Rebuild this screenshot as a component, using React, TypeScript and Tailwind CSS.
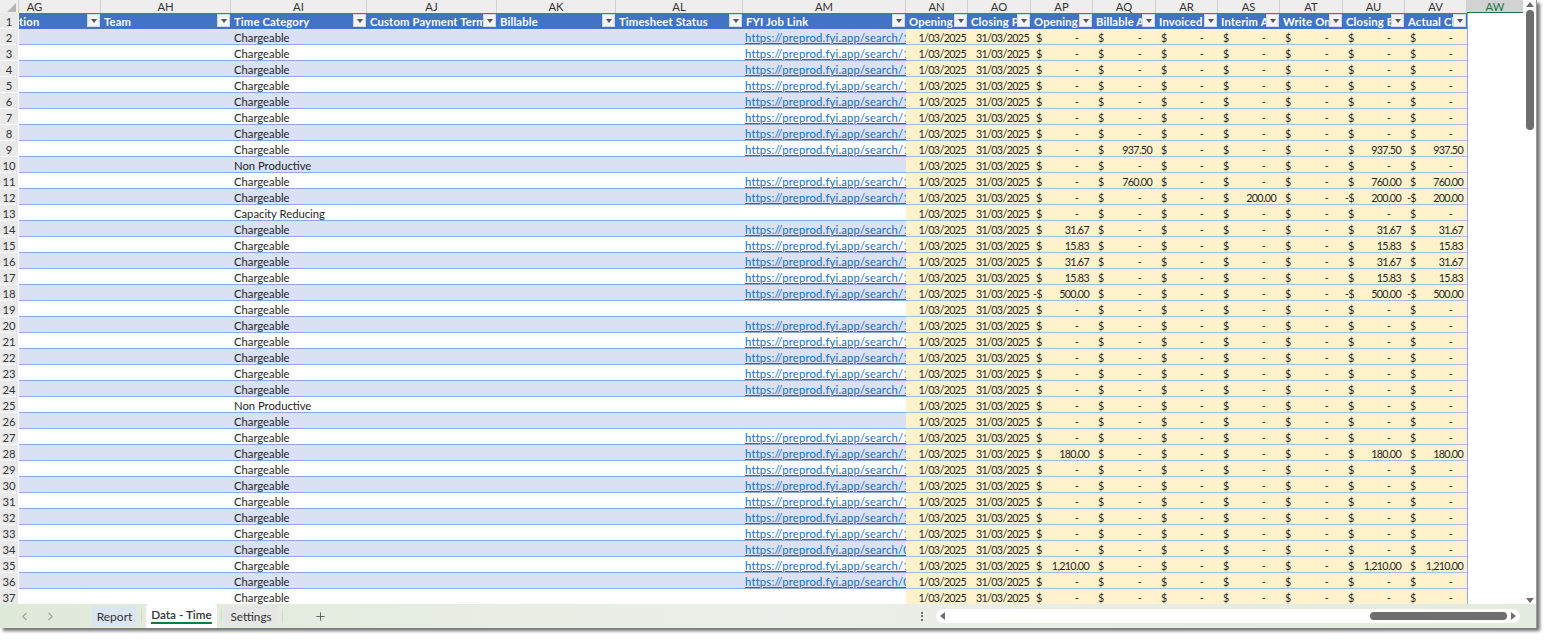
import React from 'react';
import { ChevronLeft, ChevronRight, Plus } from 'lucide-react';

const GRID = 'grid grid-cols-[19px_82px_130px_136px_130px_119px_127px_163px_62px_63px_62px_63px_62px_62px_63px_62px_62px_56px] grid-rows-[16px]';
const HEAD_GRID = 'grid grid-cols-[19px_82px_130px_136px_130px_119px_127px_163px_62px_63px_62px_63px_62px_62px_63px_62px_62px_56px] grid-rows-[13px]';
const NUM = 'text-[10.75px] tracking-[-0.65px]';

const COLUMNS = ['AH', 'AI', 'AJ', 'AK', 'AL', 'AM', 'AN', 'AO', 'AP', 'AQ', 'AR', 'AS', 'AT', 'AU', 'AV'];

const HEADERS = [
  'Team', 'Time Category', 'Custom Payment Terms', 'Billable', 'Timesheet Status', 'FYI Job Link',
  'Opening Date', 'Closing Period', 'Opening Balance', 'Billable Amount', 'Invoiced Amount', 'Interim Amount',
  'Write On/Off', 'Closing Balance', 'Actual Closing',
];

type Row = { n: number; cat: string; link?: string; vals?: Record<string, string> };

function buildRows(): Row[] {
  const noLink = [10, 13, 19, 25, 26, 37];
  const cats: Record<number, string> = { 10: 'Non Productive', 13: 'Capacity Reducing', 25: 'Non Productive' };
  const vals: Record<number, Record<string, string>> = {
    9: { AQ: '937.50', AU: '937.50', AV: '937.50' },
    11: { AQ: '760.00', AU: '760.00', AV: '760.00' },
    12: { AS: '200.00', AU: '-200.00', AV: '-200.00' },
    14: { AP: '31.67', AU: '31.67', AV: '31.67' },
    15: { AP: '15.83', AU: '15.83', AV: '15.83' },
    16: { AP: '31.67', AU: '31.67', AV: '31.67' },
    17: { AP: '15.83', AU: '15.83', AV: '15.83' },
    18: { AP: '-500.00', AU: '-500.00', AV: '-500.00' },
    28: { AP: '180.00', AU: '180.00', AV: '180.00' },
    35: { AP: '1,210.00', AU: '1,210.00', AV: '1,210.00' },
  };
  const rows: Row[] = [];
  for (let n = 2; n <= 37; n++) {
    rows.push({
      n,
      cat: cats[n] ?? 'Chargeable',
      link: noLink.includes(n) ? undefined : n === 34 || n === 36 ? 'https://preprod.fyi.app/search/0' : 'https://preprod.fyi.app/search/1',
      vals: vals[n],
    });
  }
  return rows;
}

function FilterButton() {
  return (
    <span className="mr-[1px] mt-[1px] flex h-[13px] w-[13px] shrink-0 items-center justify-center border border-[#d0d7e5] bg-[#f4f4f4]">
      <span className="h-0 w-0 border-x-[3.5px] border-t-[4px] border-x-transparent border-t-[#555]" />
    </span>
  );
}

function Money({ value }: { value?: string }) {
  const negative = value?.startsWith('-');
  const amount = negative ? value!.slice(1) : value;
  return (
    <div className={`flex justify-between overflow-hidden border-b border-[#a9bde3] bg-[#fff2cc] ${NUM}`}>
      <span className={negative ? 'pl-[2px]' : 'pl-[5px]'}>{negative ? '-$' : '$'}</span>
      {amount ? <span className="pr-[4px]">{amount}</span> : <span className="pr-[15px]">-</span>}
    </div>
  );
}

function DataRow({ row }: { row: Row }) {
  const bg = row.n % 2 === 0 ? 'bg-[#d9e1f2]' : 'bg-white';
  const plain = `${bg} overflow-hidden whitespace-nowrap border-b border-[#8ea9db]`;
  return (
    <div className={`${GRID} leading-[17px]`}>
      <div className="border-b border-r border-white bg-[#e9e9e9] text-center text-[#333]">{row.n}</div>
      <div className={plain} />
      <div className={plain} />
      <div className={`${plain} pl-[3px]`}>{row.cat}</div>
      <div className={plain} />
      <div className={plain} />
      <div className={plain} />
      <div className={`${plain} pl-[2px] tracking-[0.2px] text-[#0f6fc6] underline`}>{row.link}</div>
      <div className={`border-b border-[#a9bde3] bg-[#fff2cc] pr-[2px] text-right ${NUM}`}>1/03/2025</div>
      <div className={`border-b border-[#a9bde3] bg-[#fff2cc] pr-[2px] text-right ${NUM}`}>31/03/2025</div>
      {['AP', 'AQ', 'AR', 'AS', 'AT', 'AU', 'AV'].map((c) => (
        <Money key={c} value={row.vals?.[c]} />
      ))}
      <div className="border-l border-[#8ea9db] bg-white" />
    </div>
  );
}

export default function App() {
  const rows = buildRows();
  return (
    <div className="h-[640px] w-[1544px] overflow-hidden bg-white font-['Lato','Open_Sans',sans-serif] text-[11.25px] text-[#1f1f1f]">
      <div className="flex h-[628px] w-[1537px] flex-col border-r border-[#9a9a9a] shadow-[3px_3px_3px_rgba(0,0,0,0.55)]">
        <div className="flex min-h-0 flex-1">
          {/* sheet */}
          <div className="min-w-0 flex-1 overflow-hidden">
            <div className={`${HEAD_GRID} bg-[#eeeeee] leading-[13px] text-[#333]`}>
              <div className="relative border-r border-[#d0d0d0]">
                <span className="absolute bottom-[1px] right-[2px] h-0 w-0 border-b-[9px] border-l-[9px] border-b-[#b5b5b5] border-l-transparent" />
              </div>
              <div className="border-r border-[#d0d0d0] pr-[50px] text-center">AG</div>
              {COLUMNS.map((c) => (
                <div key={c} className="border-r border-[#d0d0d0] text-center">{c}</div>
              ))}
              <div className="border-b border-[#217346] bg-[#d2d2d2] text-center text-[#217346]">AW</div>
            </div>
            <div className={`${GRID} leading-[17px]`}>
              <div className="border-b border-r border-white bg-[#e9e9e9] text-center text-[#333]">1</div>
              <div className="flex min-w-0 bg-[#4472c4] font-bold tracking-[0.15px] text-white">
                <span className="min-w-0 flex-1 overflow-hidden whitespace-nowrap">tion</span>
                <FilterButton />
              </div>
              {HEADERS.map((h) => (
                <div key={h} className="flex min-w-0 bg-[#4472c4] pl-[3px] font-bold tracking-[0.15px] text-white">
                  <span className="min-w-0 flex-1 overflow-hidden whitespace-nowrap">{h}</span>
                  <FilterButton />
                </div>
              ))}
              <div className="border-l border-[#8ea9db] bg-white" />
            </div>
            {rows.map((r) => (
              <DataRow key={r.n} row={r} />
            ))}
          </div>

          {/* vertical scrollbar */}
          <div className="flex w-[13px] flex-col items-center bg-white pt-[2px]">
            <span className="h-0 w-0 border-x-[4px] border-b-[5px] border-x-transparent border-b-[#6e6e6e]" />
            <div className="mt-[3px] h-[120px] w-[8px] rounded-full bg-[#6e6e6e]" />
            <div className="flex-1" />
            <span className="mb-[1px] h-0 w-0 border-x-[4px] border-t-[5px] border-x-transparent border-t-[#6e6e6e]" />
          </div>
        </div>

        {/* sheet tabs */}
        <div className="flex h-[24px] items-center bg-gradient-to-r from-[#e0ead9] via-[#ecefe9] to-[#e3ebdd] text-[#333]">
          <div className="flex w-[92px] items-center gap-[13px] pl-[18px] text-[#a0a0a0]">
            <ChevronLeft size={13} />
            <ChevronRight size={13} />
          </div>
          <div className="flex h-[20px] w-[45px] items-center justify-center rounded-[3px] bg-[#dbe5f1] pt-[1px] text-[12px]">Report</div>
          <div className="ml-[4px] h-[14px] w-px bg-[#d3d8d0]" />
          <div className="ml-[4px] flex h-full w-[71px] flex-col items-center justify-center rounded-t-[4px] bg-white text-[11.75px] font-semibold">
            <span className="border-b-2 border-[#107c41] leading-[14px]">Data - Time</span>
          </div>
          <div className="ml-[4px] h-[14px] w-px bg-[#d3d8d0]" />
          <div className="ml-[3px] flex h-[20px] w-[52px] items-center justify-center rounded-[3px] bg-[#e6e6e6] pt-[1px] text-[11.75px]">Settings</div>
          <div className="ml-[5px] h-[14px] w-px bg-[#d3d8d0]" />
          <Plus size={13} strokeWidth={1.3} className="ml-[31px]" />
          <div className="flex-1" />
          <span className="mr-[13px] flex flex-col gap-[1.5px]">
            <i className="block h-[2px] w-[2px] rounded-full bg-[#444]" />
            <i className="block h-[2px] w-[2px] rounded-full bg-[#444]" />
            <i className="block h-[2px] w-[2px] rounded-full bg-[#444]" />
          </span>
          <div className="mr-[16px] flex h-[14px] w-[584px] items-center rounded-full bg-white px-[4px]">
            <span className="h-0 w-0 border-y-[4px] border-r-[5px] border-y-transparent border-r-[#6e6e6e]" />
            <div className="flex-1" />
            <div className="h-[8px] w-[137px] rounded-full bg-[#6e6e6e]" />
            <span className="ml-[4px] h-0 w-0 border-y-[4px] border-l-[5px] border-y-transparent border-l-[#6e6e6e]" />
          </div>
        </div>
      </div>
    </div>
  );
}
